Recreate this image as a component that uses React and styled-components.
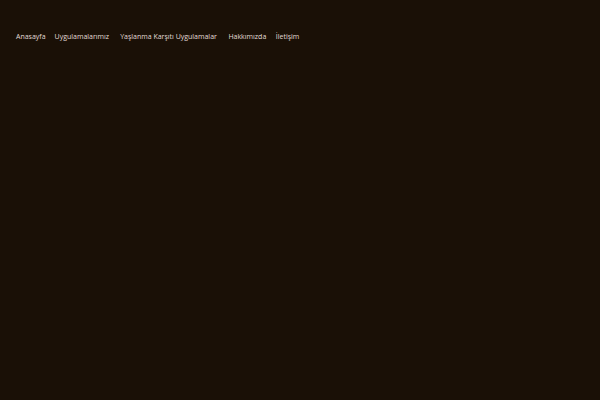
import React from "react";
import styled, { createGlobalStyle } from "styled-components";

const Global = createGlobalStyle`
  html, body { margin: 0; padding: 0; background: #1a1006; }
  #root { min-height: 100vh; }
`;

const Page = styled.div`
  width: 600px;
  height: 400px;
  background: #1a1006;
  font-family: "Open Sans", "Noto Sans", sans-serif;
`;

const Nav = styled.nav`
  display: flex;
  align-items: center;
  padding: 31px 0 0 16px;
  height: 12px;
`;

const Item = styled.a`
  color: #e2dcd6;
  font-size: 7px;
  line-height: 12px;
  text-decoration: none;
  white-space: nowrap;
  margin-right: ${(p) => p.$gap}px;
`;

const items = [
  ["Anasayfa", 9],
  ["Uygulamalarımız", 11],
  ["Yaşlanma Karşıtı Uygulamalar", 11.5],
  ["Hakkımızda", 9.5],
  ["İletişim", 0],
];

export default function App() {
  return (
    <Page>
      <Global />
      <Nav>
        {items.map(([t, g]) => (
          <Item key={t} $gap={g} href="#">
            {t}
          </Item>
        ))}
      </Nav>
    </Page>
  );
}
